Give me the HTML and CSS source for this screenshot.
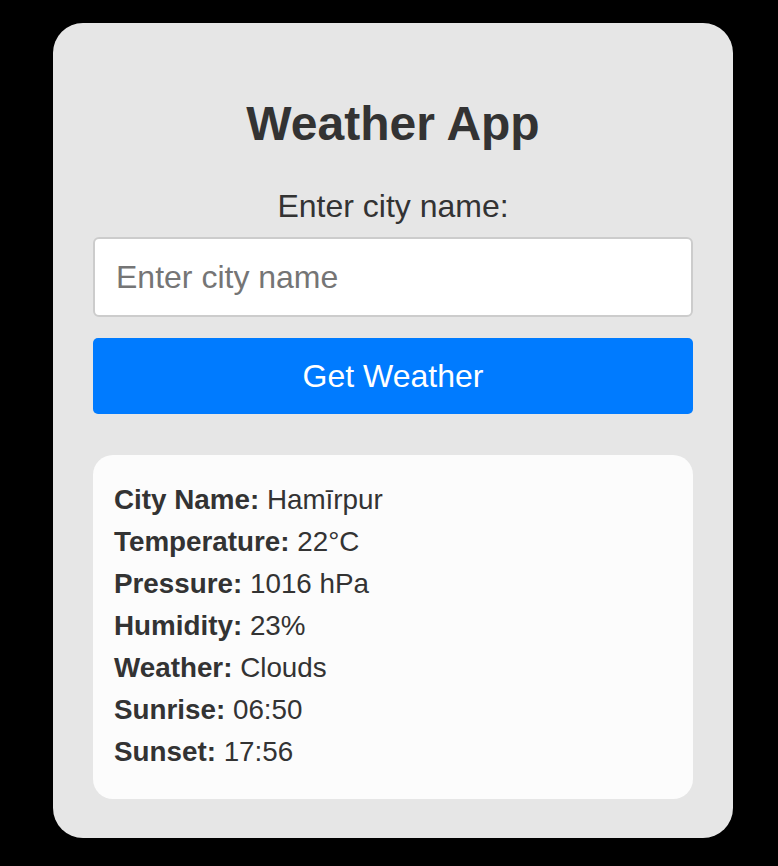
FILE: index.html
```html
<!DOCTYPE html>
<html lang="en">
<head>
<meta charset="utf-8">
<title>Weather App</title>
<link rel="stylesheet" href="styles.css">
</head>
<body>
<main class="card">
  <h1 class="title">Weather App</h1>
  <label class="label" for="city">Enter city name:</label>
  <input class="city-input" id="city" type="text" placeholder="Enter city name">
  <button class="btn" type="button">Get Weather</button>
  <section class="info">
    <div class="row"><b>City Name:</b> Hamīrpur</div>
    <div class="row"><b>Temperature:</b> 22°C</div>
    <div class="row"><b>Pressure:</b> 1016 hPa</div>
    <div class="row"><b>Humidity:</b> 23%</div>
    <div class="row"><b>Weather:</b> Clouds</div>
    <div class="row"><b>Sunrise:</b> 06:50</div>
    <div class="row"><b>Sunset:</b> 17:56</div>
  </section>
</main>
</body>
</html>
```

FILE: styles.css
```css
* { box-sizing: border-box; }
html, body {
  margin: 0;
  padding: 0;
  background: #000;
  height: 100%;
}
body {
  font-family: "Liberation Sans", Arial, sans-serif;
  color: #333;
  padding-top: 23px;
  padding-left: 53px;
}
.card {
  width: 680px;
  background: #e6e6e6;
  border-radius: 30px;
  padding: 40px 40px 39px;
  display: flex;
  flex-direction: column;
}
.card > * { flex-shrink: 0; }
.title {
  margin: 34px 0 0;
  font-size: 48px;
  font-weight: bold;
  line-height: 54px;
  text-align: center;
}
.label {
  margin-top: 37px;
  font-size: 32px;
  line-height: 37px;
  text-align: center;
}
.city-input {
  margin-top: 12px;
  height: 80px;
  width: 100%;
  border: 2px solid #cccccc;
  border-radius: 6px;
  background: #fff;
  padding: 0 21px;
  font-family: inherit;
  font-size: 32px;
  color: #333;
  outline: none;
}
.city-input::placeholder { color: #757575; }
.btn {
  margin-top: 21px;
  height: 76px;
  width: 100%;
  border: none;
  border-radius: 5px;
  background: #007bff;
  color: #fff;
  font-family: inherit;
  font-size: 32px;
  cursor: pointer;
}
.info {
  margin-top: 41px;
  background: #fcfcfc;
  border-radius: 20px;
  padding: 24px 21px 26px;
  font-size: 27.8px;
  line-height: 42px;
}
.row b { font-weight: bold; }
```
